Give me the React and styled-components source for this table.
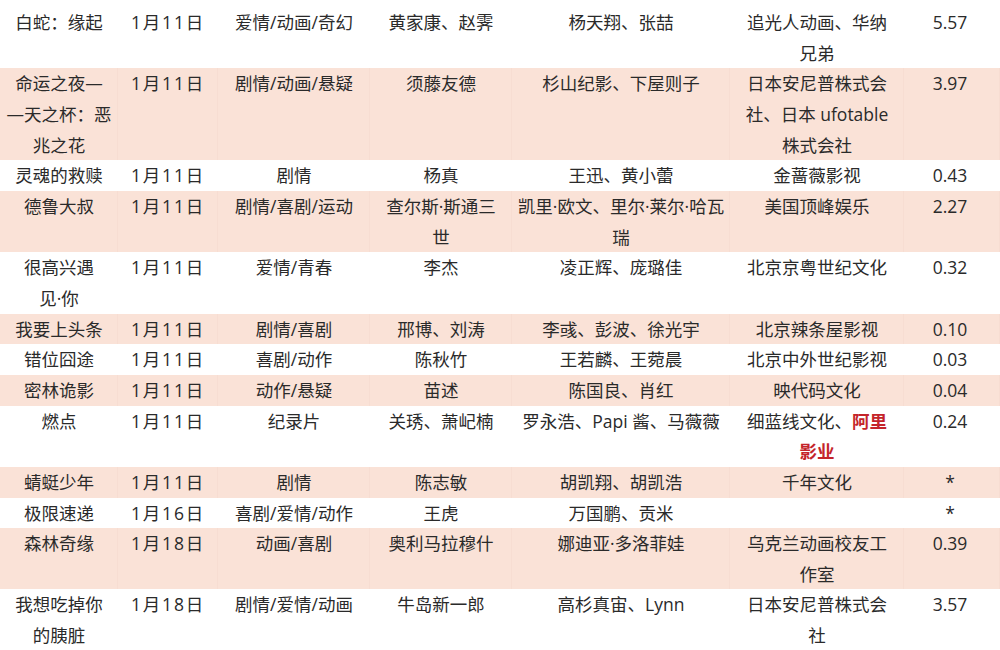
import React from "react";
import styled, { createGlobalStyle } from "styled-components";

const GlobalStyle = createGlobalStyle`
  html, body {
    margin: 0;
    padding: 0;
    background: #ffffff;
  }
  body {
    font-family: "Open Sans", "Noto Sans CJK SC", sans-serif;
    font-size: 17.5px;
    color: #2a2a2a;
  }
`;

const Table = styled.div`
  width: 1000px;
  padding-top: 7px;
`;

const Row = styled.div`
  display: grid;
  grid-template-columns: 118px 100px 152px 142px 218px 174px 96px;
  background: ${(p) => (p.$pink ? "#fae2d7" : "#ffffff")};
`;

const Cell = styled.div`
  text-align: center;
  white-space: pre-line;
  line-height: 30.65px;
  letter-spacing: ${(p) => (p.$date ? "1.8px" : "0")};
  padding-right: ${(p) => (p.$last ? "4px" : "0")};
  box-shadow: ${(p) => (p.$pink ? "inset -1px 0 0 #f7ddd2" : "none")};
`;

const Red = styled.span`
  color: #c4242a;
  font-weight: 700;
`;

const films = [
  ["白蛇：缘起", "1月11日", "爱情/动画/奇幻", "黄家康、赵霁", "杨天翔、张喆", "追光人动画、华纳\n兄弟", "5.57"],
  ["命运之夜—\n—天之杯：恶\n兆之花", "1月11日", "剧情/动画/悬疑", "须藤友德", "杉山纪影、下屋则子", "日本安尼普株式会\n社、日本 ufotable\n株式会社", "3.97"],
  ["灵魂的救赎", "1月11日", "剧情", "杨真", "王迅、黄小蕾", "金蔷薇影视", "0.43"],
  ["德鲁大叔", "1月11日", "剧情/喜剧/运动", "查尔斯·斯通三\n世", "凯里·欧文、里尔·莱尔·哈瓦\n瑞", "美国顶峰娱乐", "2.27"],
  ["很高兴遇\n见·你", "1月11日", "爱情/青春", "李杰", "凌正辉、庞璐佳", "北京京粤世纪文化", "0.32"],
  ["我要上头条", "1月11日", "剧情/喜剧", "邢博、刘涛", "李彧、彭波、徐光宇", "北京辣条屋影视", "0.10"],
  ["错位囧途", "1月11日", "喜剧/动作", "陈秋竹", "王若麟、王菀晨", "北京中外世纪影视", "0.03"],
  ["密林诡影", "1月11日", "动作/悬疑", "苗述", "陈国良、肖红", "映代码文化", "0.04"],
  [
    "燃点",
    "1月11日",
    "纪录片",
    "关琇、萧屺楠",
    "罗永浩、Papi 酱、马薇薇",
    <>
      细蓝线文化、<Red>阿里</Red>
      {"\n"}
      <Red>影业</Red>
    </>,
    "0.24",
  ],
  ["蜻蜓少年", "1月11日", "剧情", "陈志敏", "胡凯翔、胡凯浩", "千年文化", "*"],
  ["极限速递", "1月16日", "喜剧/爱情/动作", "王虎", "万国鹏、贡米", "", "*"],
  ["森林奇缘", "1月18日", "动画/喜剧", "奥利马拉穆什", "娜迪亚·多洛菲娃", "乌克兰动画校友工\n作室", "0.39"],
  ["我想吃掉你\n的胰脏", "1月18日", "剧情/爱情/动画", "牛岛新一郎", "高杉真宙、Lynn", "日本安尼普株式会\n社", "3.57"],
];

const App = () => {
  return (
    <>
      <GlobalStyle />
      <Table>
        {films.map((row, i) => {
          const pink = i % 2 === 1;
          return (
            <Row key={i} $pink={pink}>
              {row.map((c, j) => (
                <Cell
                  key={j}
                  $pink={pink}
                  $date={j === 1}
                  $last={j === row.length - 1}
                >
                  {c}
                </Cell>
              ))}
            </Row>
          );
        })}
      </Table>
    </>
  );
};

export default App;
